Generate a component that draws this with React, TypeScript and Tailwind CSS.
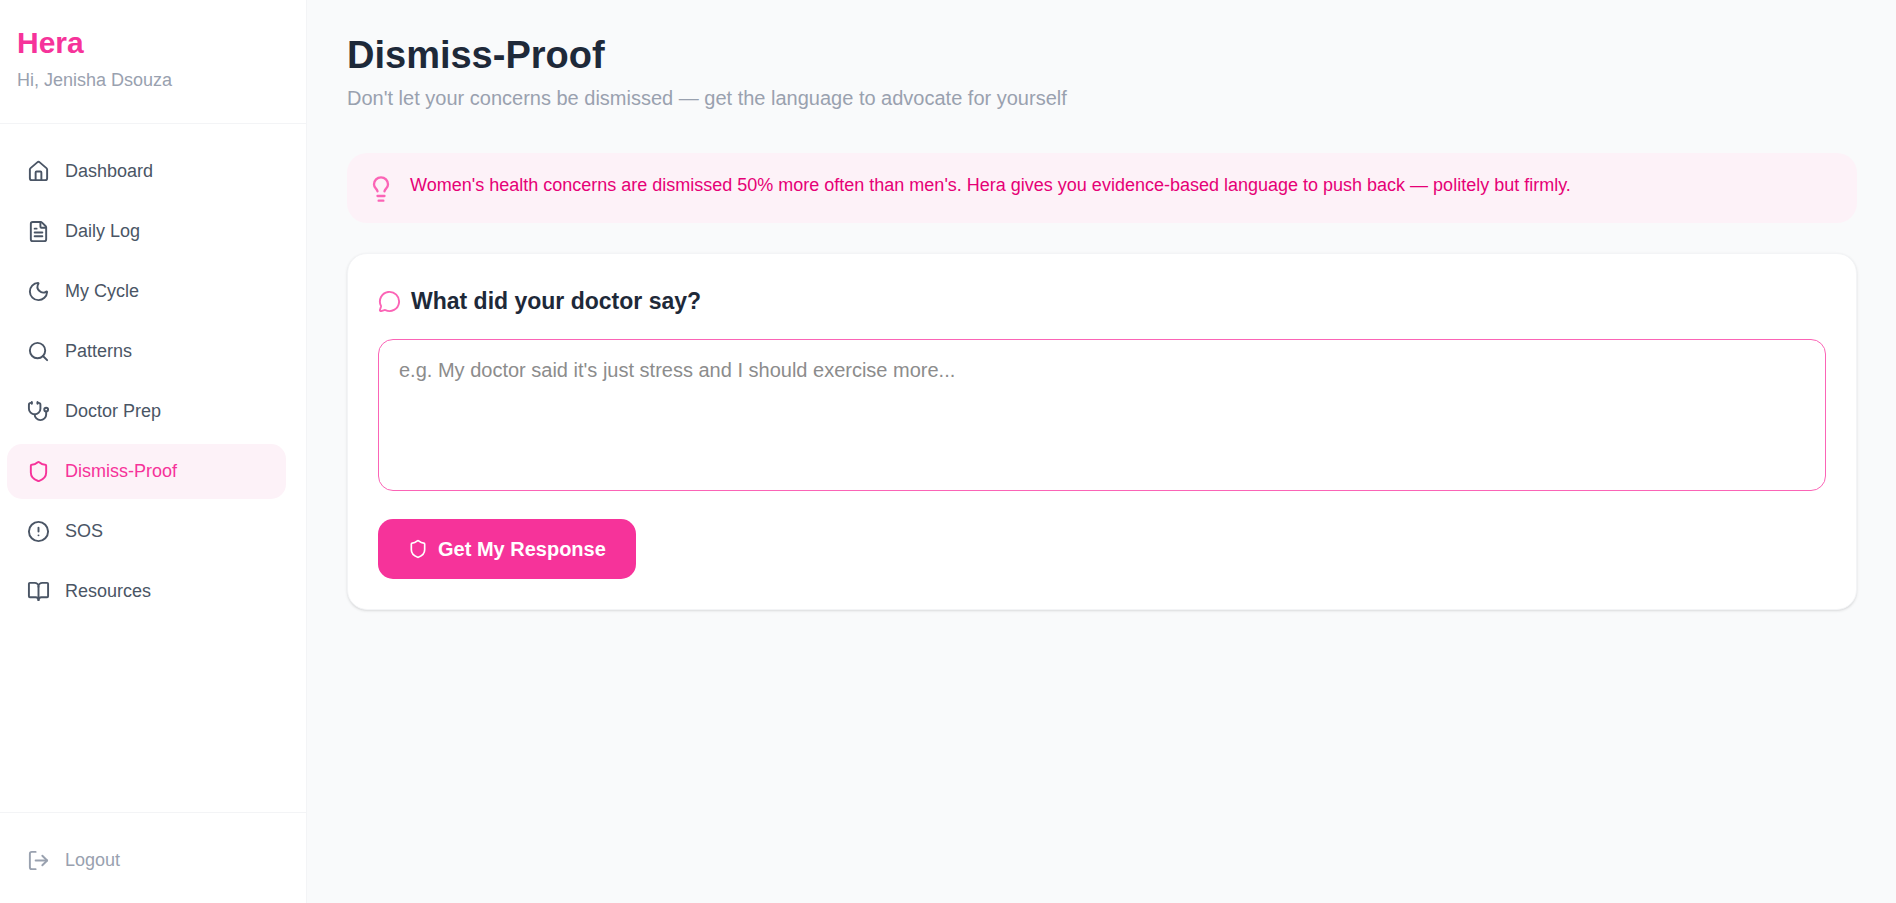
import { useState } from "react";
import {
  BookOpen,
  CircleAlert,
  FileText,
  House,
  Lightbulb,
  LogOut,
  MessageCircle,
  Moon,
  Search,
  Shield,
  Stethoscope,
} from "lucide-react";

const navItems = [
  { label: "Dashboard", icon: House },
  { label: "Daily Log", icon: FileText },
  { label: "My Cycle", icon: Moon },
  { label: "Patterns", icon: Search },
  { label: "Doctor Prep", icon: Stethoscope },
  { label: "Dismiss-Proof", icon: Shield },
  { label: "SOS", icon: CircleAlert },
  { label: "Resources", icon: BookOpen },
];

function Sidebar({ active }: { active: string }) {
  return (
    <aside className="flex w-[307px] shrink-0 flex-col border-r border-gray-100 bg-white">
      <div className="border-b border-gray-100 pt-[23px] pb-[30px] pl-[17px]">
        <p className="text-[30px] leading-10 font-bold text-[#f6339a]">Hera</p>
        <p className="mt-1 text-[18px] leading-[26px] text-gray-400">Hi, Jenisha Dsouza</p>
      </div>
      <nav className="flex flex-1 flex-col gap-[5px] py-5 pr-5 pl-[7px]">
        {navItems.map(({ label, icon: Icon }) => (
          <a
            key={label}
            href="#"
            aria-current={label === active ? "page" : undefined}
            className={
              label === active
                ? "flex h-[55px] items-center gap-[15px] rounded-[15px] bg-pink-50 px-5 text-[18px] text-[#f6339a]"
                : "flex h-[55px] items-center gap-[15px] rounded-[15px] px-5 text-[18px] text-gray-600"
            }
          >
            <Icon size={23} strokeWidth={2} />
            {label}
          </a>
        ))}
      </nav>
      <div className="border-t border-gray-100 pt-5 pr-5 pb-[15px] pl-[7px]">
        <button
          type="button"
          className="flex h-[55px] w-full items-center gap-[15px] rounded-[15px] px-5 text-[18px] text-gray-400"
        >
          <LogOut size={23} strokeWidth={2} />
          Logout
        </button>
      </div>
    </aside>
  );
}

export default function App() {
  const [statement, setStatement] = useState("");

  return (
    <div className="flex min-h-screen bg-gray-50 font-['Liberation_Sans',Arial,sans-serif]">
      <Sidebar active="Dismiss-Proof" />
      <main className="min-w-0 flex-1 pt-[33px] pr-[39px] pb-10 pl-10">
        <header>
          <h1 className="text-[38px] leading-[45px] font-bold text-gray-800">Dismiss-Proof</h1>
          <p className="mt-[5px] text-[20px] leading-[30px] text-gray-400">
            Don't let your concerns be dismissed — get the language to advocate for yourself
          </p>
        </header>

        <section className="mt-10 flex items-start gap-[15px] rounded-[20px] bg-pink-50 p-5">
          <Lightbulb size={28} strokeWidth={2} className="mt-[2px] shrink-0 text-[#fb64b6]" />
          <p className="text-[18px] leading-[25px] text-[#e60076]">
            Women's health concerns are dismissed 50% more often than men's. Hera gives you evidence-based
            language to push back — politely but firmly.
          </p>
        </section>

        <section className="mt-[30px] rounded-[20px] border border-gray-100 bg-white p-[30px] shadow-sm">
          <h2 className="flex items-center gap-[10px] text-[23px] leading-[35px] font-bold text-gray-800">
            <MessageCircle size={23} strokeWidth={2} className="text-[#fb64b6]" />
            <label htmlFor="statement">What did your doctor say?</label>
          </h2>
          <textarea
            id="statement"
            value={statement}
            onChange={(e) => setStatement(e.target.value)}
            placeholder="e.g. My doctor said it's just stress and I should exercise more..."
            className="mt-5 block h-[152px] w-full resize-none rounded-[15px] border border-[#fb64b6] px-5 py-[15px] text-[20px] leading-[30px] text-gray-700 outline-none placeholder:text-[#8c8c8c]"
          />
          <button
            type="button"
            className="mt-7 flex h-[60px] items-center gap-[10px] rounded-[15px] bg-[#f6339a] px-[30px] text-[20px] font-bold text-white"
          >
            <Shield size={20} strokeWidth={2} />
            Get My Response
          </button>
        </section>
      </main>
    </div>
  );
}
